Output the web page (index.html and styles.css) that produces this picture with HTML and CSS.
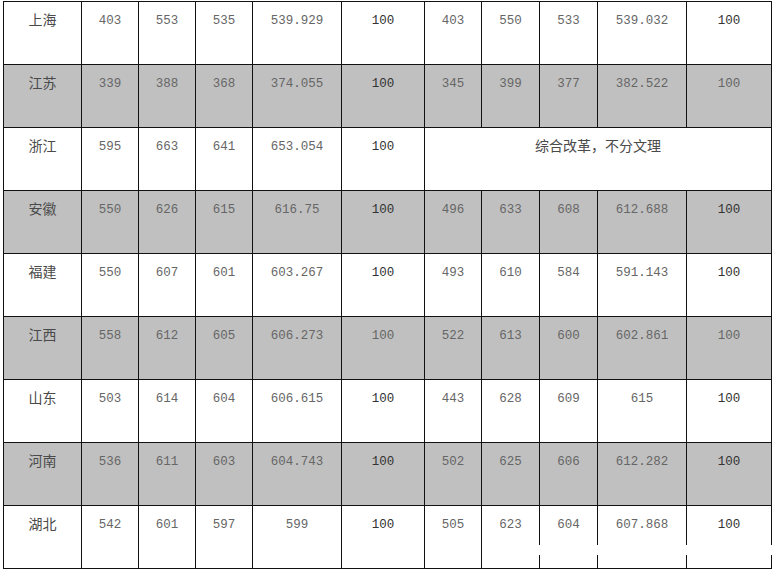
FILE: index.html
```html
<!DOCTYPE html>
<html lang="zh">
<head>
<meta charset="utf-8">
<link rel="stylesheet" href="styles.css">
</head>
<body>
<div class="page">
<table class="scores">
  <colgroup>
    <col class="c-prov"><col class="c-n"><col class="c-n"><col class="c-n"><col class="c-avg"><col class="c-full1">
    <col class="c-n"><col class="c-n2"><col class="c-n2"><col class="c-avg"><col class="c-full2">
  </colgroup>
  <tbody>
    <tr><td class="prov">上海</td><td>403</td><td>553</td><td>535</td><td>539.929</td><td class="full">100</td><td>403</td><td>550</td><td>533</td><td>539.032</td><td class="full">100</td></tr>
    <tr class="alt"><td class="prov">江苏</td><td>339</td><td>388</td><td>368</td><td>374.055</td><td class="full">100</td><td>345</td><td>399</td><td>377</td><td>382.522</td><td>100</td></tr>
    <tr><td class="prov">浙江</td><td>595</td><td>663</td><td>641</td><td>653.054</td><td class="full">100</td><td colspan="5" class="note">综合改革，不分文理</td></tr>
    <tr class="alt"><td class="prov">安徽</td><td>550</td><td>626</td><td>615</td><td>616.75</td><td class="full">100</td><td>496</td><td>633</td><td>608</td><td>612.688</td><td class="full">100</td></tr>
    <tr><td class="prov">福建</td><td>550</td><td>607</td><td>601</td><td>603.267</td><td class="full">100</td><td>493</td><td>610</td><td>584</td><td>591.143</td><td class="full">100</td></tr>
    <tr class="alt"><td class="prov">江西</td><td>558</td><td>612</td><td>605</td><td>606.273</td><td>100</td><td>522</td><td>613</td><td>600</td><td>602.861</td><td>100</td></tr>
    <tr><td class="prov">山东</td><td>503</td><td>614</td><td>604</td><td>606.615</td><td class="full">100</td><td>443</td><td>628</td><td>609</td><td>615</td><td class="full">100</td></tr>
    <tr class="alt"><td class="prov">河南</td><td>536</td><td>611</td><td>603</td><td>604.743</td><td class="full">100</td><td>502</td><td>625</td><td>606</td><td>612.282</td><td class="full">100</td></tr>
    <tr><td class="prov">湖北</td><td>542</td><td>601</td><td>597</td><td>599</td><td class="full">100</td><td>505</td><td>623</td><td>604</td><td>607.868</td><td class="full">100</td></tr>
  </tbody>
</table>
<div class="smudge"></div>
</div>
</body>
</html>
```

FILE: styles.css
```css
html, body {
  margin: 0;
  padding: 0;
  background: #fff;
}

.page {
  position: relative;
  width: 778px;
  height: 571px;
  overflow: hidden;
  padding-top: 1px;
  padding-left: 3px;
  box-sizing: border-box;
}

.scores {
  border-collapse: collapse;
  table-layout: fixed;
  width: 769px;
  font-family: "Liberation Mono", "DejaVu Sans Mono", monospace;
  font-size: 12.5px;
  color: #666;
}

.c-prov { width: 78px; }
.c-n { width: 57px; }
.c-n2 { width: 58px; }
.c-avg { width: 89px; }
.c-full1 { width: 83px; }
.c-full2 { width: 85px; }

.scores td {
  border: 1px solid #111;
  height: 63px;
  padding: 11px 0 0 0;
  box-sizing: border-box;
  vertical-align: top;
  text-align: center;
  line-height: 16px;
  white-space: nowrap;
}

.scores tr.alt td {
  background: #c0c0c0;
}

.scores td.prov,
.scores td.note {
  font-family: "Noto Sans CJK SC", sans-serif;
  font-size: 14px;
  color: #4a4a4a;
  padding-top: 9px;
}

.scores td.full {
  color: #333;
}

.smudge {
  position: absolute;
  left: 535px;
  top: 545px;
  width: 243px;
  height: 10px;
  background: #fff;
}
```
